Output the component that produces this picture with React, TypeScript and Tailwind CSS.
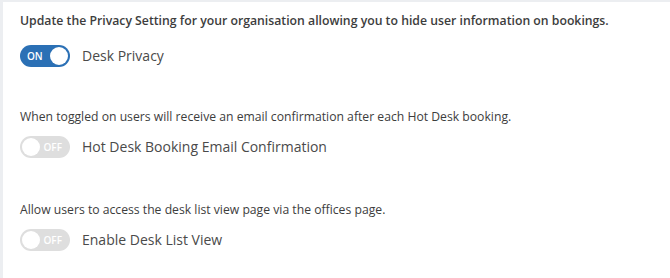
import React from "react";

function Toggle({ on }: { on: boolean }) {
  if (on) {
    return (
      <div className="relative flex h-[22px] w-[50px] shrink-0 items-center rounded-full bg-[#2b70b5]">
        <span className="ml-[7px] text-[10px] font-semibold leading-none text-white">ON</span>
        <span className="absolute right-[2px] top-[2px] h-[18px] w-[18px] rounded-full bg-white" />
      </div>
    );
  }
  return (
    <div className="relative flex h-[22px] w-[50px] shrink-0 items-center justify-end rounded-full bg-[#dedede]">
      <span className="mr-[8px] text-[10px] font-semibold leading-none text-white">OFF</span>
      <span className="absolute left-[2px] top-[2px] h-[18px] w-[18px] rounded-full bg-white" />
    </div>
  );
}

export default function App() {
  return (
    <div
      className="h-[278px] w-[670px] overflow-hidden bg-[#eceef1] pl-[3px] pt-[2px]"
      style={{ fontFamily: '"Open Sans", sans-serif' }}
    >
      <div className="h-full w-full bg-white pl-[17px] pt-[10px]">
        <p className="text-[12.25px] font-semibold leading-[18px] text-[#3d3d3d]">
          Update the Privacy Setting for your organisation allowing you to hide user information on bookings.
        </p>
        <div className="mt-[15px] flex items-center gap-[12px]">
          <Toggle on={true} />
          <span className="text-[14px] leading-[20px] text-[#4a4a4a]">Desk Privacy</span>
        </div>

        <p className="mt-[41px] text-[12.2px] leading-[18px] text-[#3d3d3d]">
          When toggled on users will receive an email confirmation after each Hot Desk booking.
        </p>
        <div className="mt-[10px] flex items-center gap-[12px]">
          <Toggle on={false} />
          <span className="text-[14px] leading-[20px] text-[#4a4a4a]">Hot Desk Booking Email Confirmation</span>
        </div>

        <p className="mt-[43px] text-[12.2px] leading-[18px] text-[#3d3d3d]">
          Allow users to access the desk list view page via the offices page.
        </p>
        <div className="mt-[10px] flex items-center gap-[12px]">
          <Toggle on={false} />
          <span className="text-[14px] leading-[20px] text-[#4a4a4a]">Enable Desk List View</span>
        </div>
      </div>
    </div>
  );
}
